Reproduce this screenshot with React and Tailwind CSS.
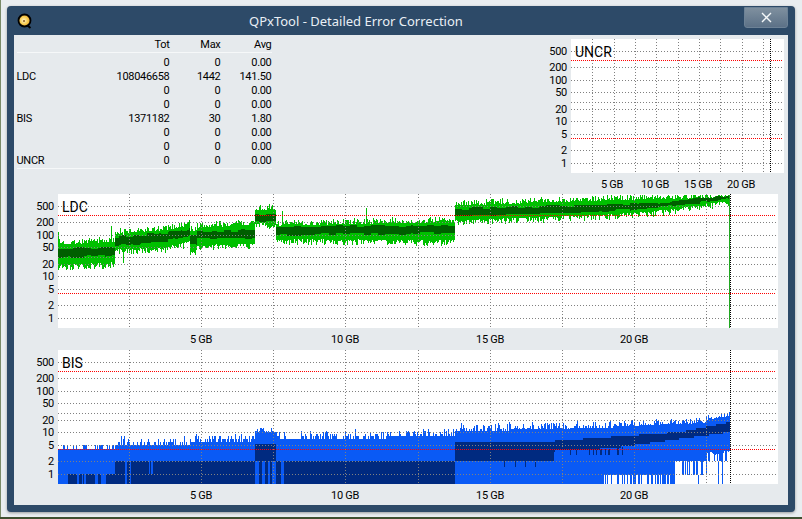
import React from 'react'

const FONT = { fontFamily: 'Roboto, "Liberation Sans", sans-serif' }

const rows = [
  ['', '0', '0', '0.00'],
  ['LDC', '108046658', '1442', '141.50'],
  ['', '0', '0', '0.00'],
  ['', '0', '0', '0.00'],
  ['BIS', '1371182', '30', '1.80'],
  ['', '0', '0', '0.00'],
  ['', '0', '0', '0.00'],
  ['UNCR', '0', '0', '0.00'],
]

const TICKS = [500, 200, 100, 50, 20, 10, 5, 2, 1]
const GRID = [500, 200, 100, 50, 30, 20, 10, 5, 2, 1]

// seeded so the noise stays the same on every load
function makeRandom(seed) {
  let a = seed
  return () => {
    a = (a + 0x6d2b79f5) | 0
    let t = Math.imul(a ^ (a >>> 15), 1 | a)
    t = (t + Math.imul(t ^ (t >>> 7), 61 | t)) ^ t
    return ((t ^ (t >>> 14)) >>> 0) / 4294967296
  }
}

const lerp = (a, b, t) => a + (b - a) * t
const col = (x, y0, y1) => (y1 > y0 ? `M${x} ${Math.round(y0)}h1V${Math.round(y1)}h-1z` : '')

// x0, x1, then light top/bottom and dark top/bottom at both ends
const ldcSegments = [
  [58, 115, 242, 268, 249, 258, 239, 265, 247, 255],
  [115, 165, 231, 252, 237, 246, 228, 250, 233, 241],
  [165, 190, 228, 250, 233, 241, 222, 244, 229, 236],
  [190, 197, 228, 253, 236, 245, 228, 253, 236, 245],
  [197, 255, 225, 248, 232, 238, 222, 246, 230, 238],
  [255, 276, 207, 226, 214, 221, 207, 226, 214, 221],
  [276, 455, 223, 242, 227, 235, 219, 243, 225, 233],
  [455, 590, 203, 223, 209, 216, 198, 218, 205, 212],
  [590, 655, 198, 218, 205, 212, 196, 214, 203, 208],
  [655, 730, 196, 214, 203, 208, 195, 203, 195, 199],
]

const ldcSpikes = { 58: [232, 270], 111: [226, 262], 123: [236, 263], 282: [211, 240], 366: [208, 240] }

function buildLdc() {
  const rnd = makeRandom(7)
  let light = ''
  let dark = ''
  let stepTop = 0
  let stepBottom = 0
  ldcSegments.forEach(([x0, x1, lt0, lb0, dt0, db0, lt1, lb1, dt1, db1]) => {
    for (let x = x0; x < x1; x++) {
      const t = (x - x0) / (x1 - x0)
      if (x % 7 === 0) {
        stepTop = Math.round(rnd() * 2 - 1)
        stepBottom = Math.round(rnd() * 2 - 1)
      }
      let top = lerp(lt0, lt1, t) - Math.pow(rnd(), 1.6) * 6 + 3
      let bottom = lerp(lb0, lb1, t) + Math.pow(rnd(), 1.6) * 6 - 3
      if (ldcSpikes[x]) [top, bottom] = ldcSpikes[x]
      light += col(x, Math.max(top, 195), bottom)
      dark += col(x, Math.max(lerp(dt0, dt1, t) + stepTop, 195), lerp(db0, db1, t) + stepBottom)
    }
  })
  return { light, dark }
}

const bisY = (n) => 474 - 41.6 * Math.log10(n)

const inRanges = (x, ranges) => ranges.some(([a, b]) => x >= a && x < b)

function buildBis() {
  const rnd = makeRandom(21)
  let light = ''
  let dark = ''
  let white = ''
  const lowStripes = [[77, 79], [82, 83], [84, 86], [95, 98], [101, 106], [281, 284]]
  const midStripes = [[125, 127], [130, 131], [149, 150], [151, 153], [259, 262], [265, 268], [270, 272], [276, 278]]
  for (let x = 58; x < 730; x++) {
    let base = 4
    let amp = 1.6
    if (x >= 115 && x < 190) { base = 5; amp = 2.8 }
    else if (x >= 190 && x < 255) { base = 6; amp = 3 }
    else if (x >= 255 && x < 276) { base = 10; amp = 5 }
    else if (x >= 276 && x < 455) { base = lerp(6.5, 8, (x - 276) / 179); amp = 4.5 }
    else if (x >= 455 && x < 600) { base = lerp(10.5, 13, (x - 455) / 145); amp = 6.5 }
    else if (x >= 600 && x < 706) { base = lerp(13, 17, (x - 600) / 106); amp = 6 }
    else if (x >= 706) { base = lerp(20, 25, (x - 706) / 24); amp = 6 }
    const count = Math.round(base + Math.pow(rnd(), 2.6) * amp)
    light += col(x, bisY(count), 484)

    // dark blocks under the noise
    if (x >= 68 && x < 115 && !inRanges(x, lowStripes)) dark += col(x, 474, 484)
    if (x >= 115 && x < 255) {
      if (!inRanges(x, midStripes)) dark += col(x, 461, 484)
      else dark += rnd() > 0.5 ? col(x, 474, 484) : ''
    }
    if (x >= 255 && x < 276) {
      dark += col(x, 444, 461)
      if (inRanges(x, midStripes)) dark += col(x, 461, 484)
    }
    if (x >= 276 && x < 455 && !inRanges(x, lowStripes)) dark += col(x, 461, 484)
    if (x >= 455 && x < 554) dark += col(x, 442, 461)
    if (x >= 554) {
      const t = (x - 554) / 176
      const top = x < 680 ? lerp(441, 432, (x - 554) / 126) : lerp(432, 422, (x - 680) / 50)
      const bottom = x < 620 ? lerp(451, 448, t * 2.6) : lerp(447, 432, (x - 620) / 110)
      dark += col(x, Math.round(top / 2) * 2, Math.round(bottom / 2) * 2)
      if (x < 625 && rnd() > 0.78) dark += col(x, bottom, 455)
    }
    if (x >= 455 && x < 600 && rnd() > 0.96) dark += col(x, 461, 467)

    // white gaps toward the end of the disc
    if (x >= 603 && x < 675 && rnd() > 0.55) white += col(x, 475, 484)
    if (x >= 675 && x < 707) {
      if (x !== 698) white += col(x, 475, 484)
      if (rnd() > 0.55) white += col(x, 461, 475)
    }
    if (x >= 707) {
      if (x !== 718 && x !== 722) white += col(x, 461, 484)
      if (rnd() > 0.45) white += col(x, 450 + rnd() * 5, 461)
    }
  }
  return { light, dark, white }
}

const ldc = buildLdc()
const bis = buildBis()

function Plot({ view, title, plot, one, verticals, marker, labels, labelY, tickRight, titleX, children }) {
  const y = (v) => Math.round(one - 41.6 * Math.log10(v))
  const [left, top, right, bottom] = plot
  return (
    <svg width={view[2]} height={view[3]} viewBox={view.join(' ')} className="block shrink-0">
      <rect x={left} y={top} width={right - left} height={bottom - top} fill="#ffffff" />
      <g shapeRendering="crispEdges">{children}</g>
      <g fill="none" strokeWidth="1">
        <g stroke="#808080">
          {GRID.map((v) => (
            <line key={v} x1={left} x2={right - 2} y1={y(v) + 0.5} y2={y(v) + 0.5} strokeDasharray="1 2" />
          ))}
          {verticals.map((x) => (
            <line key={x} x1={x + 0.5} x2={x + 0.5} y1={top} y2={bottom} strokeDasharray="1 2" />
          ))}
        </g>
        <line x1={left} x2={right - 2} y1={y(300) + 0.5} y2={y(300) + 0.5} stroke="#ff0000" strokeDasharray="1 1" />
        <line x1={left} x2={right - 2} y1={y(4) + 0.5} y2={y(4) + 0.5} stroke="#ff0000" strokeDasharray="1 1" />
        <line x1={marker + 0.5} x2={marker + 0.5} y1={top} y2={bottom} stroke="#000000" strokeDasharray="1 1" />
      </g>
      <g style={FONT} fontSize="11" letterSpacing="-0.3" fill="#000000">
        {TICKS.map((v) => (
          <text key={v} x={tickRight} y={y(v) + 4} textAnchor="end">{v}</text>
        ))}
        {labels.map(([x, text]) => (
          <text key={text} x={x} y={labelY} textAnchor="middle">{text}</text>
        ))}
      </g>
      <text x={titleX} y={top + 18} style={FONT} fontSize="14" fill="#000000">{title}</text>
    </svg>
  )
}

const bigVerticals = [1, 2, 3, 4, 5, 6, 7, 8, 9].map((i) => Math.round(56.7 + 72.17 * i))
const bigLabels = [[201, '5 GB'], [345, '10 GB'], [490, '15 GB'], [634, '20 GB']]
const smallVerticals = [1, 2, 3, 4, 5, 6, 7, 8, 9].map((i) => Math.round(570.8 + 21.37 * i))
const smallLabels = [[612, '5 GB'], [655, '10 GB'], [698, '15 GB'], [741, '20 GB']]

function QIcon() {
  return (
    <svg width="16" height="16" viewBox="0 0 16 16" className="block">
      <defs>
        <radialGradient id="disc" cx="0.45" cy="0.5" r="0.6">
          <stop offset="0" stopColor="#fff6c8" />
          <stop offset="0.55" stopColor="#f6c94a" />
          <stop offset="1" stopColor="#e8962a" />
        </radialGradient>
      </defs>
      <path d="M10.5 12.5l3 2.5" stroke="#000000" strokeWidth="2" />
      <circle cx="7.5" cy="7.5" r="6" fill="url(#disc)" stroke="#000000" strokeWidth="1.8" />
      <circle cx="7" cy="8" r="1" fill="#8a5a20" />
    </svg>
  )
}

export default function App() {
  return (
    <div className="w-[802px] h-[519px] overflow-hidden pt-[2px] pl-[1px] pr-[2px] pb-[2px] bg-[linear-gradient(transparent_517px,#3f4f30_517px),linear-gradient(to_right,#7a8a68_1px,#e9edf0_1px)]" style={FONT}>
      <div className="h-full rounded-[8px] bg-[#e9edf0] pt-[4px] pl-[6px] pr-[5px] pb-[5px]">
        <div className="h-full rounded-[4px] bg-[#2d4a68] px-[7px] pb-[7px] flex flex-col shadow-[0_1px_3px_rgba(0,0,0,0.35)]">
          {/* Title bar */}
          <div className="h-[29px] shrink-0 flex items-start">
            <div className="mt-[7px] ml-[3px]">
              <QIcon />
            </div>
            <div className="ml-[216px] mt-[5px] text-[13px] leading-[20px] text-[#e9eff5]" style={{ fontFamily: '"Noto Sans", sans-serif' }}>
              QPxTool - Detailed Error Correction
            </div>
            <div className="ml-auto mt-[1px] w-[44px] h-[21px] rounded-b-[3px] bg-gradient-to-b from-[#7f909f] to-[#5c7187] border border-[#6d8296] flex items-center justify-center">
              <svg width="11" height="11" viewBox="0 0 11 11">
                <path d="M1 1l9 9M10 1l-9 9" stroke="#f5f8fa" strokeWidth="1.4" />
              </svg>
            </div>
          </div>

          {/* Content */}
          <div className="flex-1 bg-[#e6eaed] flex flex-col min-h-0">
            <div className="h-[155px] shrink-0 flex justify-between">
              <div className="w-[255px] ml-[2.5px] pt-[3px] text-[11px] tracking-[-0.3px] text-black">
                <div className="grid grid-cols-[1fr_51px_51px] h-[15px] leading-[14px] border-b border-[#f6f8f9] text-right">
                  <span>Tot</span>
                  <span>Max</span>
                  <span>Avg</span>
                </div>
                <div className="mt-[3px] border-b border-[#f6f8f9] h-[113px]">
                  {rows.map((row, i) => (
                    <div key={i} className="grid grid-cols-[1fr_51px_51px] h-[14px] leading-[14px] text-right relative">
                      <span>{row[1]}</span>
                      <span>{row[2]}</span>
                      <span>{row[3]}</span>
                      {row[0] && <span className="absolute left-0 top-0">{row[0]}</span>}
                    </div>
                  ))}
                </div>
              </div>
              <Plot
                view={[545, 35, 243, 155]}
                title="UNCR"
                titleX={575}
                plot={[571, 39, 784, 173]}
                one={163}
                verticals={smallVerticals}
                marker={770}
                labels={smallLabels}
                labelY={188}
                tickRight={567}
              />
            </div>
            <Plot
              view={[14, 190, 774, 156]}
              title="LDC"
              titleX={62}
              plot={[58, 194, 778, 328]}
              one={318}
              verticals={bigVerticals}
              marker={730}
              labels={bigLabels}
              labelY={343}
              tickRight={54}
            >
              <path d={ldc.light} fill="#00c000" />
              <path d={ldc.dark} fill="#005f00" />
              <rect x="729" y="195" width="1" height="133" fill="#22a822" />
            </Plot>
            <Plot
              view={[14, 346, 774, 156]}
              title="BIS"
              titleX={62}
              plot={[58, 350, 778, 484]}
              one={474}
              verticals={bigVerticals}
              marker={730}
              labels={bigLabels}
              labelY={499}
              tickRight={54}
            >
              <path d={bis.light} fill="#0a5af5" />
              <path d={bis.dark} fill="#002a80" />
              <path d={bis.white} fill="#ffffff" />
            </Plot>
          </div>
        </div>
      </div>
    </div>
  )
}
